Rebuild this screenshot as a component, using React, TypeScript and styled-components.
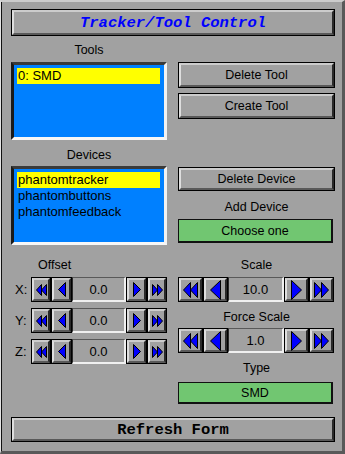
import React from "react";
import styled, { createGlobalStyle, css } from "styled-components";

const GlobalStyle = createGlobalStyle`
  html, body { margin: 0; padding: 0; background: #a1a1a1; }
  *, *::before, *::after { box-sizing: border-box; }
  body { font-family: "Liberation Sans", Arial, sans-serif; }
`;

// xforms style up box: light top/left, dark bottom/right, thin black rim
const raised = css`
  border: 3px solid;
  border-color: #cccccc #292929 #595959 #dedede;
  outline: 1px solid #000000;
  outline-offset: -1px;
  background: #a1a1a1;
`;

const Window = styled.div`
  width: 345px;
  height: 454px;
  display: flex;
  flex-direction: column;
  background: #a1a1a1;
  border-top: 2px solid #cccccc;
  border-left: 1px solid #e4e4e4;
  border-right: 3px solid #595959;
  border-bottom: 3px solid #595959;
  box-shadow: inset 1px 0 0 #111111;
  padding: 7px 7px 0 10px;
  color: #000000;
  font-family: "Liberation Sans", Arial, sans-serif;
`;

const TitleBar = styled.div`
  ${raised};
  height: 27px;
  display: flex;
  align-items: center;
  justify-content: center;
  font-family: "Liberation Mono", "Courier New", monospace;
  font-weight: bold;
  font-style: italic;
  font-size: 15.5px;
  color: #0000ff;
`;

const Pane = styled.div`
  display: grid;
  grid-template-columns: 156px 157px;
  column-gap: 11px;
  align-items: start;
`;

const Column = styled.div<{ $pt?: number; $gap?: number }>`
  display: flex;
  flex-direction: column;
  padding-top: ${(p) => p.$pt ?? 0}px;
  gap: ${(p) => p.$gap ?? 0}px;
`;

const Caption = styled.div<{ $mt: number; $mb: number; $indent?: number }>`
  height: 16px;
  line-height: 16px;
  font-size: 12.5px;
  margin: ${(p) => p.$mt}px 0 ${(p) => p.$mb}px;
  text-align: ${(p) => (p.$indent !== undefined ? "left" : "center")};
  padding-left: ${(p) => p.$indent ?? 0}px;
`;

const ListBox = styled.div<{ $h: number }>`
  height: ${(p) => p.$h}px;
  background: #0080ff;
  border: 3px solid;
  border-color: #3a3a3a #f2f2f2 #f7f7f7 #1a1a1a;
  padding: 3px 4px 0 3px;
`;

const ListRow = styled.div<{ $selected?: boolean }>`
  height: 16px;
  line-height: 16px;
  font-size: 13px;
  padding-left: 1px;
  white-space: nowrap;
  color: #000000;
  background: ${(p) => (p.$selected ? "#ffff00" : "transparent")};
`;

const PushButton = styled.button<{ $h: number }>`
  ${raised};
  height: ${(p) => p.$h}px;
  width: 100%;
  padding: 0;
  font-family: "Liberation Sans", Arial, sans-serif;
  font-size: 12.5px;
  color: #000000;
  cursor: pointer;
`;

const ChoiceBox = styled.div<{ $h: number }>`
  height: ${(p) => p.$h}px;
  width: 155px;
  display: flex;
  align-items: center;
  justify-content: center;
  background: #71c671;
  border: 1px solid #111111;
  border-right-width: 2px;
  border-bottom-width: 2px;
  font-size: 12.5px;
`;

const CounterRow = styled.div`
  display: flex;
  align-items: center;
  height: 25px;
`;

const AxisLabel = styled.span`
  width: 20px;
  padding-left: 4px;
  font-size: 13px;
`;

const CounterBody = styled.div`
  display: flex;
  height: 25px;
`;

const StepButton = styled.button<{ $w: number }>`
  ${raised};
  width: ${(p) => p.$w}px;
  height: 100%;
  padding: 0;
  display: flex;
  align-items: center;
  justify-content: center;
  cursor: pointer;
`;

const ValueField = styled.div<{ $w: number }>`
  width: ${(p) => p.$w}px;
  height: 100%;
  display: flex;
  align-items: center;
  justify-content: center;
  background: #a1a1a1;
  border-style: solid;
  border-width: 1px 2px 2px 1px;
  border-color: #595959 #f0f0f0 #f0f0f0 #292929;
  font-size: 13px;
`;

const RefreshButton = styled.button`
  ${raised};
  height: 25px;
  width: 100%;
  margin-top: 13px;
  padding: 0;
  font-family: "Liberation Mono", "Courier New", monospace;
  font-weight: bold;
  font-size: 15.5px;
  color: #000000;
  cursor: pointer;
`;

type ArrowProps = { dir: "left" | "right"; double?: boolean; big?: boolean };

const Arrow = ({ dir, double, big }: ArrowProps) => {
  const w = double ? (big ? 7 : 5) : big ? 10 : 7;
  const h = double ? (big ? 15 : 11) : big ? 19 : 14;
  const count = double ? 2 : 1;
  const total = w * count;
  const tri = (x0: number) => {
    const a = x0 + 0.5;
    const b = x0 + w + 0.5;
    return dir === "left"
      ? `${a},${h / 2 + 0.5} ${b},0.5 ${b},${h + 0.5}`
      : `${b},${h / 2 + 0.5} ${a},0.5 ${a},${h + 0.5}`;
  };
  return (
    <svg width={total + 1} height={h + 1} viewBox={`0 0 ${total + 1} ${h + 1}`}>
      {Array.from({ length: count }).map((_, i) => (
        <polygon key={i} points={tri(i * w)} fill="#0000ff" stroke="#000000" strokeWidth={1} strokeLinejoin="miter" />
      ))}
    </svg>
  );
};

const Counter = ({ value, big }: { value: string; big?: boolean }) => {
  const fast = big ? 25 : 20;
  const step = big ? 25 : 21;
  const field = big ? 56 : 54;
  return (
    <CounterBody>
      <StepButton $w={fast}><Arrow dir="left" double big={big} /></StepButton>
      <StepButton $w={step}><Arrow dir="left" big={big} /></StepButton>
      <ValueField $w={field}>{value}</ValueField>
      <StepButton $w={step}><Arrow dir="right" big={big} /></StepButton>
      <StepButton $w={fast}><Arrow dir="right" double big={big} /></StepButton>
    </CounterBody>
  );
};

const devices = ["phantomtracker", "phantombuttons", "phantomfeedback"];

export default function App() {
  return (
    <>
      <GlobalStyle />
      <Window>
        <TitleBar>Tracker/Tool Control</TitleBar>

        <Pane>
          <Column>
            <Caption $mt={6} $mb={4}>Tools</Caption>
            <ListBox $h={78}>
              <ListRow $selected>0: SMD</ListRow>
            </ListBox>
          </Column>
          <Column $pt={26} $gap={5}>
            <PushButton $h={26}>Delete Tool</PushButton>
            <PushButton $h={26}>Create Tool</PushButton>
          </Column>
        </Pane>

        <Pane>
          <Column>
            <Caption $mt={7} $mb={3}>Devices</Caption>
            <ListBox $h={79}>
              {devices.map((d, i) => (
                <ListRow key={d} $selected={i === 0}>{d}</ListRow>
              ))}
            </ListBox>
          </Column>
          <Column $pt={27}>
            <PushButton $h={24}>Delete Device</PushButton>
            <Caption $mt={8} $mb={4}>Add Device</Caption>
            <ChoiceBox $h={24}>Choose one</ChoiceBox>
          </Column>
        </Pane>

        <Pane>
          <Column $gap={6}>
            <Caption $mt={12} $mb={-2} $indent={27}>Offset</Caption>
            {["X:", "Y:", "Z:"].map((axis) => (
              <CounterRow key={axis}>
                <AxisLabel>{axis}</AxisLabel>
                <Counter value="0.0" />
              </CounterRow>
            ))}
          </Column>
          <Column>
            <Caption $mt={12} $mb={4}>Scale</Caption>
            <Counter value="10.0" big />
            <Caption $mt={7} $mb={3}>Force Scale</Caption>
            <Counter value="1.0" big />
            <Caption $mt={7} $mb={6}>Type</Caption>
            <ChoiceBox $h={22}>SMD</ChoiceBox>
          </Column>
        </Pane>

        <RefreshButton>Refresh Form</RefreshButton>
      </Window>
    </>
  );
}
